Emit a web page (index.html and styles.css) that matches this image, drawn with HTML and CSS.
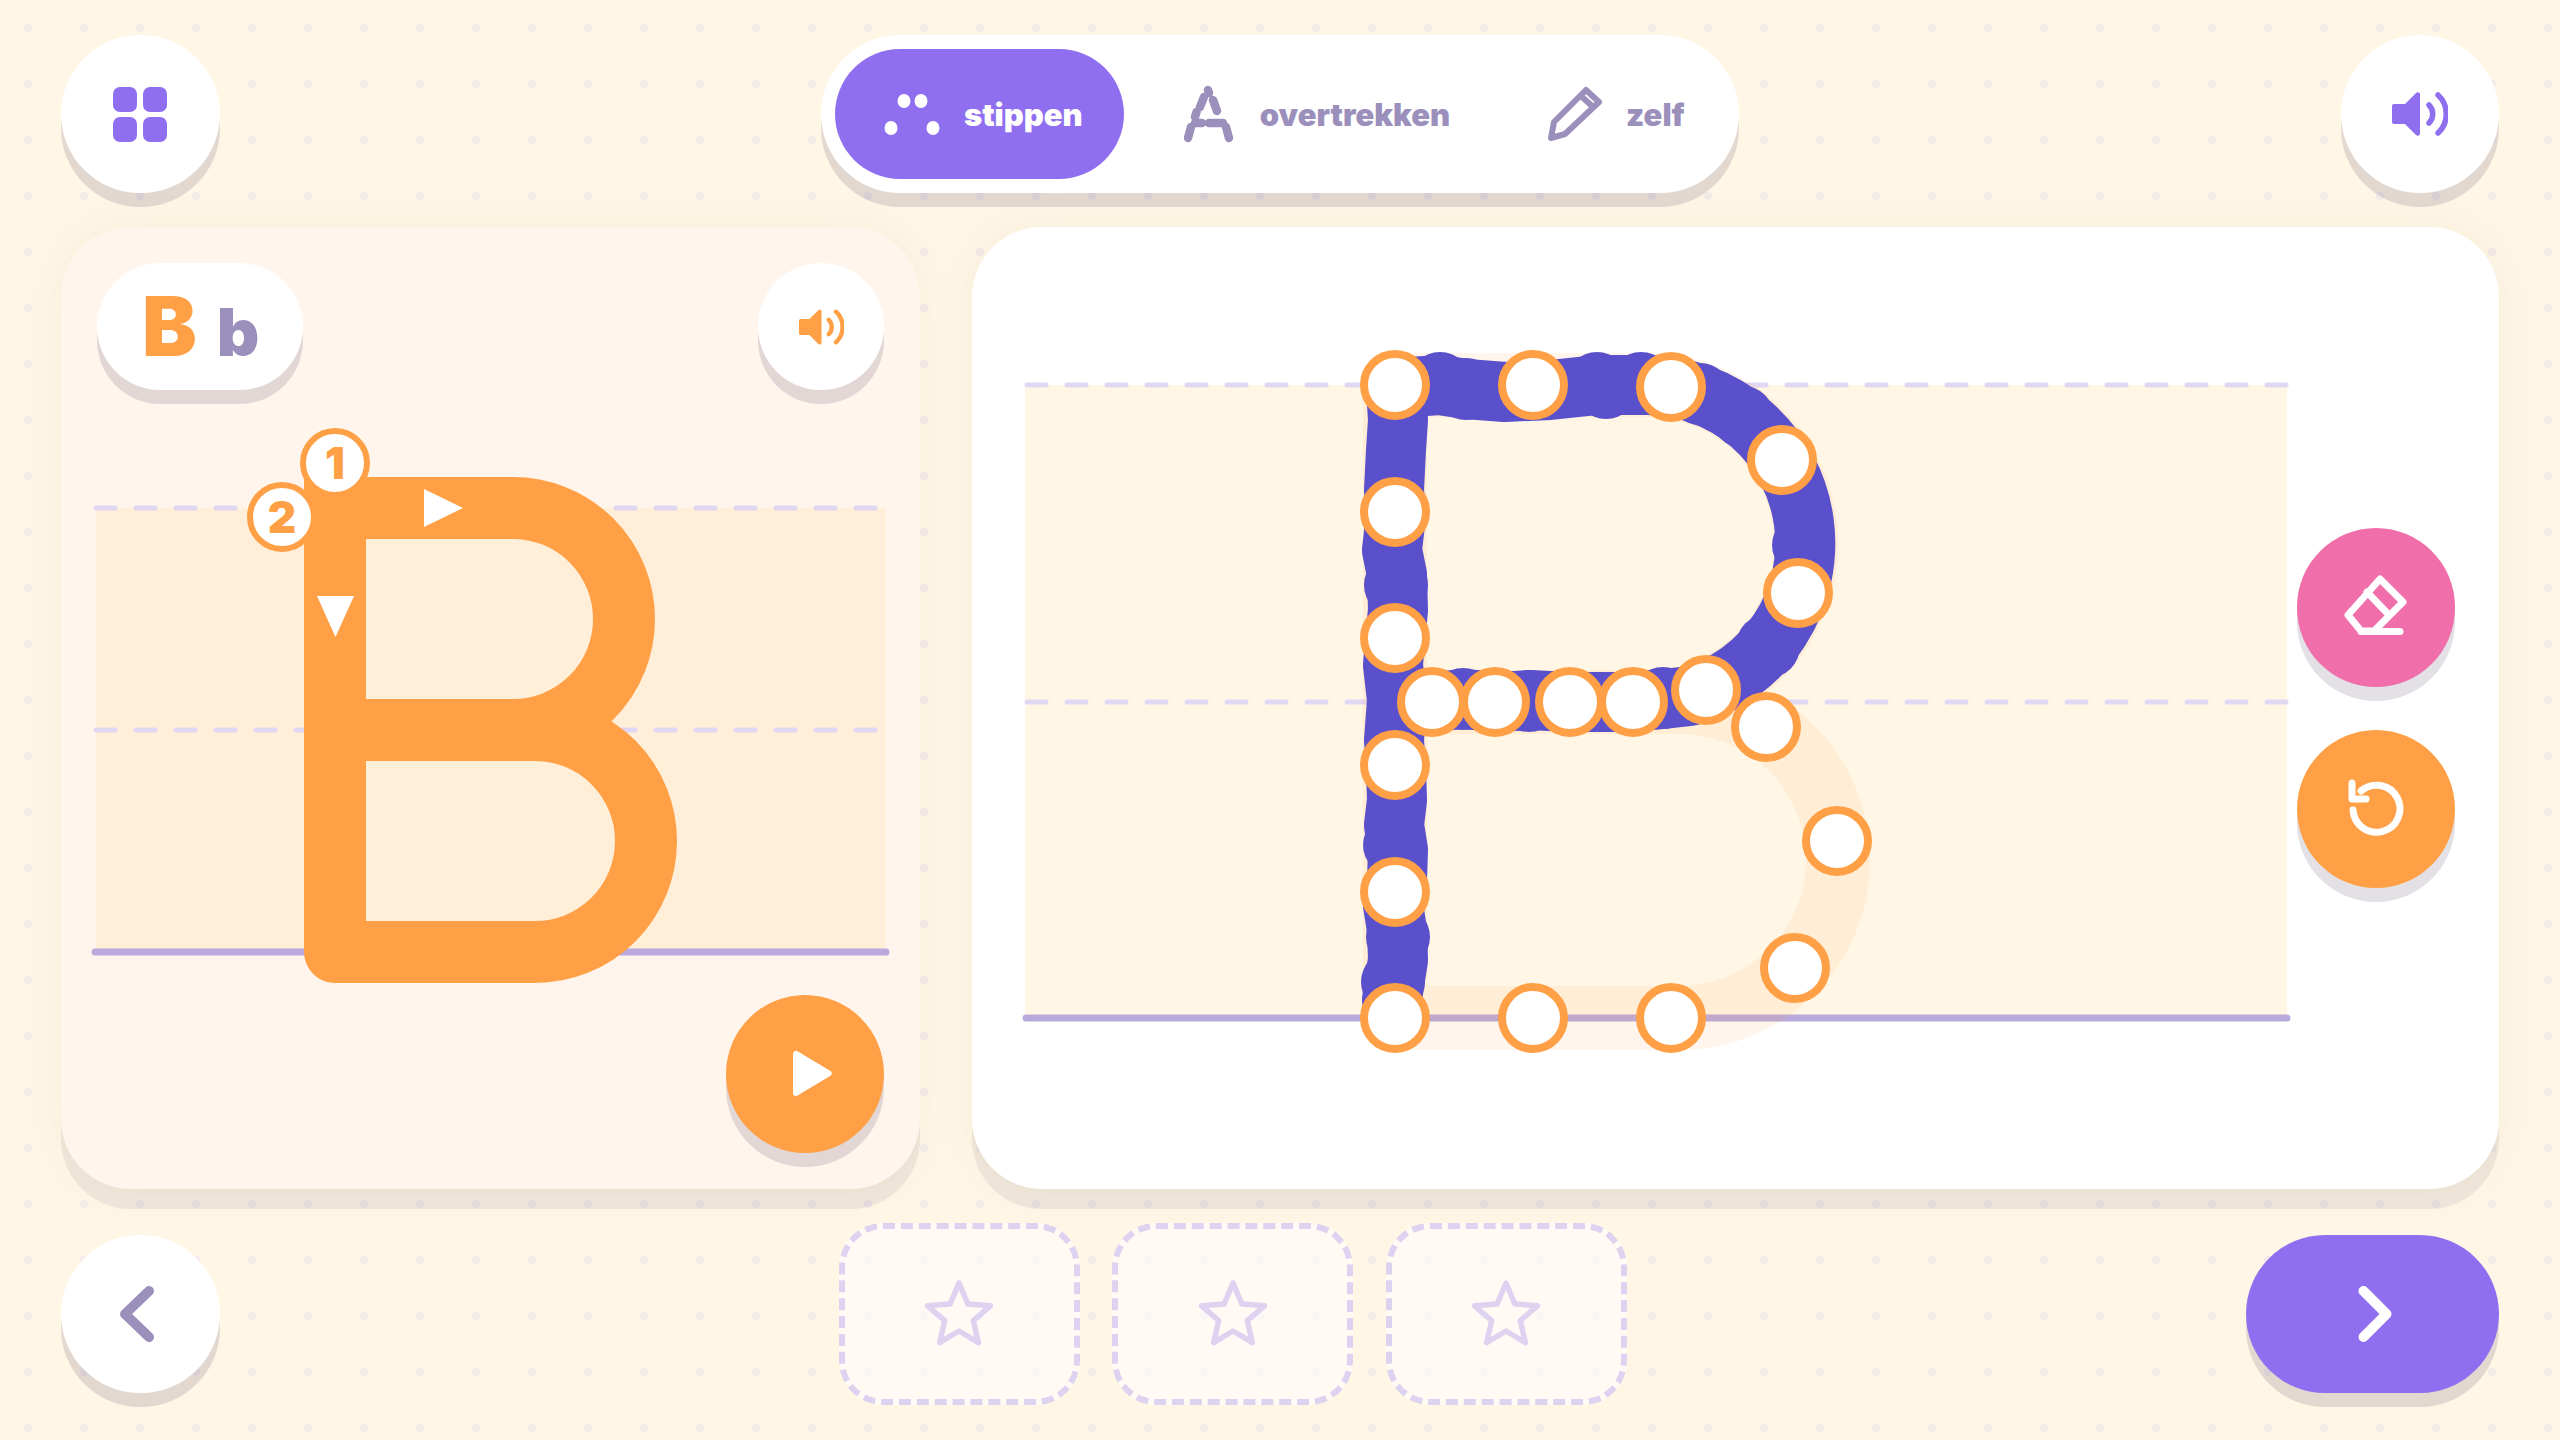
FILE: index.html
```html
<!DOCTYPE html>
<html lang="nl">
<head>
  <meta charset="UTF-8">
  <title>Letters schrijven</title>
  <meta name="viewport" content="width=device-width, initial-scale=1.0">
  <link rel="stylesheet" href="styles.css">
</head>
<body>

<header class="top-bar">
  <button class="round-btn icon-purple">
    <svg class="icon-56" viewBox="0 0 56 56"><rect x="1" y="1" width="24" height="25" rx="7"/><rect x="31" y="1" width="24" height="25" rx="7"/><rect x="1" y="31" width="24" height="25" rx="7"/><rect x="31" y="31" width="24" height="25" rx="7"/></svg>
  </button>

  <nav class="mode-pill">
    <a href="#" class="mode-item active">
      <svg class="mode-icon" viewBox="884 90 56 50" fill="currentColor"><ellipse cx="904" cy="102" rx="6.500" ry="7"/><ellipse cx="921" cy="102" rx="6.500" ry="7"/><ellipse cx="891" cy="129" rx="6.500" ry="7"/><ellipse cx="933" cy="129" rx="6.500" ry="7"/></svg>
      stippen
    </a>
    <a href="#" class="mode-item trace-mode">
      <svg class="mode-icon" viewBox="1183 84 50 60" fill="none" stroke="currentColor" stroke-width="8.500" stroke-linecap="round"><path d="M1187 138l3-11M1194 117l1.500-5M1199 107l4-10M1207 90l1 3M1212 100l4 11M1225 127l3 11M1194 123h7M1208 123h14"/></svg>
      overtrekken
    </a>
    <a href="#" class="mode-item free-mode">
      <svg class="mode-icon" viewBox="1547 86 56 58" fill="none" stroke="currentColor" stroke-width="6" stroke-linejoin="round" stroke-linecap="round"><path d="M1586 91l13 12-34 32-14 4 3-16zM1581 97l11 10"/></svg>
      zelf
    </a>
  </nav>

  <button class="round-btn icon-purple">
    <svg class="sound" viewBox="0 0 56 44"><use href="#speaker"/></svg>
  </button>
</header>

<main class="work-area">
  <section class="example-panel">
    <svg class="canvas" viewBox="61 227 859 962">
      <rect x="96" y="508" width="790" height="444" fill="#ffefd8"/>
      <path class="guide-dash" d="M96 508H886M96 730H886"/>
      <path class="guide-base" d="M95 952H886"/>
      <path class="example-letter" d="M335 508H513A111 111 0 0 1 513 730H335M335 730H535A110 110 0 0 1 535 952H335ZM335 508V952"/>
      <rect x="304" y="477" width="40" height="40" fill="#ffa046"/>
      <polygon points="424,489 463,508 424,527" fill="#fff"/>
      <polygon points="317,596 354,596 335.500,637" fill="#fff"/>
      <circle class="step" cx="335" cy="463" r="32"/>
      <text class="step-nr" x="335" y="479">1</text>
      <circle class="step" cx="282" cy="517" r="32"/>
      <text class="step-nr" x="282" y="533">2</text>
    </svg>

    <div class="panel-row">
      <div class="letter-tag"><span class="big">B</span><span class="small">b</span></div>
      <button class="round-btn small-btn icon-orange">
        <svg class="sound-small" viewBox="0 0 56 44"><use href="#speaker"/></svg>
      </button>
    </div>

    <button class="round-btn orange-btn play-btn">
      <svg class="icon-56" viewBox="0 0 56 56" fill="#fff"><path d="M16 8c0-2.500 2.500-4 4.500-2.800l33 19.800c1.800 1 1.800 3.700 0 4.800l-33 19.800C18.500 51 16 49.500 16 47z"/></svg>
    </button>
  </section>

  <section class="trace-panel">
    <svg class="canvas" viewBox="972 227 1527 962">
      <rect x="1025" y="385" width="1262" height="633" fill="#fff6e6"/>
      <path class="guide-dash" d="M1027 385H2287M1027 702H2287"/>
      <path class="guide-base" d="M1026 1018H2287"/>
      <path class="ghost-letter" d="M1395 385H1647.500A158.500 158.500 0 0 1 1647.500 702H1395M1395 702H1680A158 158 0 0 1 1680 1018H1395ZM1395 385V1018"/>

      <g class="trace">
        <path d="M1392 1000L1394 985 1398 960 1397 930 1393 905 1397 880 1398 850 1394 825 1397 800 1396 770 1394 740 1397 700 1393 665 1395 640 1398 610 1397 575 1392 550 1396 515 1394 490 1396 450 1398 420 1396 388 1440 385 1466 389 1505 392 1550 390 1597 385 1647 385A158.500 158.500 0 0 1 1690 696L1663 699 1630 702 1570 702 1529 700 1500 702 1463 699 1432 702"/>
        <circle cx="1440" cy="383" r="31"/>
        <circle cx="1466" cy="389" r="31"/>
        <circle cx="1597" cy="383" r="31"/>
        <circle cx="1641" cy="383" r="31"/>
        <circle cx="1606" cy="388" r="31"/>
        <circle cx="1700" cy="394" r="31"/>
        <circle cx="1743" cy="417" r="31"/>
        <circle cx="1803" cy="545" r="31"/>
        <circle cx="1768" cy="646" r="32"/>
        <circle cx="1463" cy="699" r="31"/>
        <circle cx="1529" cy="701" r="31"/>
        <circle cx="1663" cy="698" r="31"/>
        <circle cx="1396" cy="585" r="32"/>
        <circle cx="1394" cy="845" r="31"/>
        <circle cx="1398" cy="937" r="32"/>
        <circle cx="1393" cy="982" r="32"/>
      </g>

      <g class="dots">
        <circle cx="1395" cy="385" r="31"/>
        <circle cx="1533" cy="385" r="31"/>
        <circle cx="1671" cy="387" r="31"/>
        <circle cx="1782" cy="460" r="31"/>
        <circle cx="1798" cy="593" r="31"/>
        <circle cx="1706" cy="690" r="31"/>
        <circle cx="1633" cy="702" r="31"/>
        <circle cx="1570" cy="702" r="31"/>
        <circle cx="1495" cy="702" r="31"/>
        <circle cx="1432" cy="702" r="31"/>
        <circle cx="1395" cy="512" r="31"/>
        <circle cx="1395" cy="638" r="31"/>
        <circle cx="1395" cy="765" r="31"/>
        <circle cx="1395" cy="892" r="31"/>
        <circle cx="1395" cy="1018" r="31"/>
        <circle cx="1533" cy="1018" r="31"/>
        <circle cx="1671" cy="1018" r="31"/>
        <circle cx="1795" cy="968" r="31"/>
        <circle cx="1837" cy="841" r="31"/>
        <circle cx="1766" cy="727" r="31"/>
      </g>
    </svg>

    <div class="side-tools">
      <button class="round-btn pink-btn">
        <svg class="tool-icon" viewBox="0 0 80 80"><path d="M44 12l23 23-29 29H25L12 48zM31 25l22 23M25 64.500h39"/></svg>
      </button>
      <button class="round-btn orange-btn">
        <svg class="tool-icon" viewBox="0 0 80 80"><path d="M17 41A23.500 23.500 0 1 0 25 22M16 14V30H30"/></svg>
      </button>
    </div>
  </section>
</main>

<footer class="bottom-bar">
  <button class="round-btn">
    <svg class="chevron" viewBox="0 0 56 80" stroke="#9b8fbb"><path d="M37 17L13 40 37 63"/></svg>
  </button>

  <div class="stars">
    <div class="star-box"><svg class="star" viewBox="0 0 72 72"><use href="#star"/></svg></div>
    <div class="star-box"><svg class="star" viewBox="0 0 72 72"><use href="#star"/></svg></div>
    <div class="star-box"><svg class="star" viewBox="0 0 72 72"><use href="#star"/></svg></div>
  </div>

  <button class="next-btn">
    <svg class="chevron" viewBox="0 0 56 80" stroke="#fff"><path d="M18.500 17L41.500 40 18.500 63"/></svg>
  </button>
</footer>

<!-- shared icons -->
<svg class="defs" width="0" height="0">
  <symbol id="speaker" viewBox="0 0 56 44" overflow="visible">
    <path fill="currentColor" d="M2 12h11L24 1c1.600-1.500 4-.6 4 1.500v39c0 2.100-2.400 3-4 1.500L13 32H2a2 2 0 0 1-2-2V14a2 2 0 0 1 2-2z"/>
    <path fill="none" stroke="currentColor" stroke-width="5.500" stroke-linecap="round" d="M37 13c5 5 5 13 0 18M46 3c11 10 11 28 0 38"/>
  </symbol>
  <symbol id="star" viewBox="0 0 72 72">
    <path fill="none" stroke="#ddd3f0" stroke-width="5.500" stroke-linejoin="round" d="M36 5l8.800 20.900 22.600 1.900-17.100 14.800 5.100 22.100L36 53 16.600 64.700l5.100-22.100L4.600 27.800l22.600-1.900z"/>
  </symbol>
</svg>

</body>
</html>
```

FILE: styles.css
```css
* {
  box-sizing: border-box;
}

body {
  margin: 0;
  width: 2560px;
  height: 1440px;
  padding: 35px 61px 0;
  overflow: hidden;
  font-family: Inter, "Noto Sans", sans-serif;
  background-color: #fff6e6;
  background-image: radial-gradient(circle at 28px 28px, #f3ebe9 4px, transparent 4.5px);
  background-size: 56px 56px;
}

button {
  border: none;
  padding: 0;
  cursor: pointer;
  font: inherit;
}

/* buttons */
.round-btn {
  width: 158.500px;
  height: 158.500px;
  flex: none;
  display: flex;
  align-items: center;
  justify-content: center;
  border-radius: 50%;
  background: #fff;
  box-shadow: 0 14px 0 rgba(70, 50, 90, 0.15);
}

.small-btn {
  width: 126px;
  height: 127px;
}

.orange-btn {
  background: #ffa046;
}

.pink-btn {
  background: #f06fab;
}

.icon-purple {
  color: #8f6ff0;
  fill: #8f6ff0;
}

.icon-orange {
  color: #ffa046;
}

.icon-56 {
  width: 56px;
  height: 56px;
}

.sound {
  width: 56px;
  height: 44px;
}

.sound-small {
  width: 45px;
  height: 36px;
}

/* top */
.top-bar {
  height: 158px;
  margin-bottom: 34px;
  display: flex;
  justify-content: space-between;
  align-items: center;
}

.mode-pill {
  width: 918px;
  height: 158px;
  padding: 14px;
  display: flex;
  border-radius: 79px;
  background: #fff;
  box-shadow: 0 14px 0 rgba(70, 50, 90, 0.15);
}

.mode-item {
  height: 130px;
  padding: 0 41px 0 49px;
  display: flex;
  align-items: center;
  gap: 24px;
  border-radius: 65px;
  color: #9b8fbb;
  font-size: 31px;
  font-weight: 900;
  text-decoration: none;
}

.mode-item.active {
  background: #8f6ff0;
  color: #fff;
}

.mode-icon {
  width: 56px;
  height: 60px;
}

.trace-mode {
  margin-left: 11px;
  gap: 26px;
}

.trace-mode .mode-icon {
  width: 50px;
}

.free-mode {
  margin-left: 7px;
  gap: 23px;
}

/* panels */
.work-area {
  height: 962px;
  display: flex;
  gap: 52px;
}

.example-panel,
.trace-panel {
  position: relative;
  border-radius: 70px;
  box-shadow: 0 20px 0 rgba(70, 50, 90, 0.08), 0 0 44px rgba(120, 80, 40, 0.06);
}

.example-panel {
  width: 859px;
  padding: 36px;
  display: flex;
  flex-direction: column;
  justify-content: space-between;
  background: #fff5ec;
}

.trace-panel {
  width: 1527px;
  padding-right: 44px;
  display: flex;
  justify-content: flex-end;
  align-items: center;
  background: #fff;
}

.canvas {
  position: absolute;
  top: 0;
  left: 0;
  width: 100%;
  height: 100%;
}

.panel-row {
  position: relative;
  display: flex;
  justify-content: space-between;
}

.letter-tag {
  width: 206px;
  height: 127px;
  padding-left: 45px;
  display: flex;
  align-items: baseline;
  gap: 20px;
  border-radius: 64px;
  background: #fff;
  box-shadow: 0 14px 0 rgba(70, 50, 90, 0.15);
  font-weight: 900;
  line-height: 127px;
}

.letter-tag .big {
  color: #ffa046;
  font-size: 82px;
}

.letter-tag .small {
  color: #9b8fbb;
  font-size: 66px;
}

.play-btn {
  position: relative;
  align-self: flex-end;
}

.guide-dash {
  fill: none;
  stroke: #e2d7f2;
  stroke-width: 5;
  stroke-linecap: round;
  stroke-dasharray: 19 21;
}

.guide-base {
  fill: none;
  stroke: #b9a9dc;
  stroke-width: 7;
  stroke-linecap: round;
}

.example-letter {
  fill: none;
  stroke: #ffa046;
  stroke-width: 62;
  stroke-linejoin: round;
}

.ghost-letter {
  fill: none;
  stroke: #ffa046;
  stroke-opacity: 0.1;
  stroke-width: 64;
  stroke-linejoin: round;
}

.step {
  fill: #fff;
  stroke: #ffa046;
  stroke-width: 6;
}

.step-nr {
  fill: #ffa046;
  font-size: 44px;
  font-weight: 900;
  text-anchor: middle;
}

.trace path {
  fill: none;
  stroke: #5a50cc;
  stroke-width: 60;
  stroke-linecap: round;
  stroke-linejoin: round;
}

.trace circle {
  fill: #5a50cc;
}

.dots circle {
  fill: #fff;
  stroke: #ffa046;
  stroke-width: 8;
}

.side-tools {
  position: relative;
  display: flex;
  flex-direction: column;
  gap: 43px;
}

.tool-icon {
  width: 80px;
  height: 80px;
  fill: none;
  stroke: #fff;
  stroke-width: 7;
  stroke-linecap: round;
  stroke-linejoin: round;
}

/* bottom */
.bottom-bar {
  height: 158px;
  margin-top: 46px;
  display: flex;
  justify-content: space-between;
  align-items: center;
}

.chevron {
  width: 56px;
  height: 80px;
  fill: none;
  stroke-width: 10;
  stroke-linecap: round;
  stroke-linejoin: round;
}

.next-btn {
  width: 253px;
  height: 158px;
  display: flex;
  align-items: center;
  justify-content: center;
  border-radius: 79px;
  background: #8f6ff0;
  box-shadow: 0 14px 0 rgba(70, 50, 90, 0.15);
}

.stars {
  display: flex;
  gap: 32.500px;
}

.star-box {
  width: 241px;
  height: 182px;
  display: flex;
  align-items: center;
  justify-content: center;
  border: 6px dashed #ddd3f0;
  border-radius: 44px;
  background: rgba(255, 255, 255, 0.55);
}

.star {
  width: 72px;
  height: 72px;
}

.defs {
  position: absolute;
}
```
